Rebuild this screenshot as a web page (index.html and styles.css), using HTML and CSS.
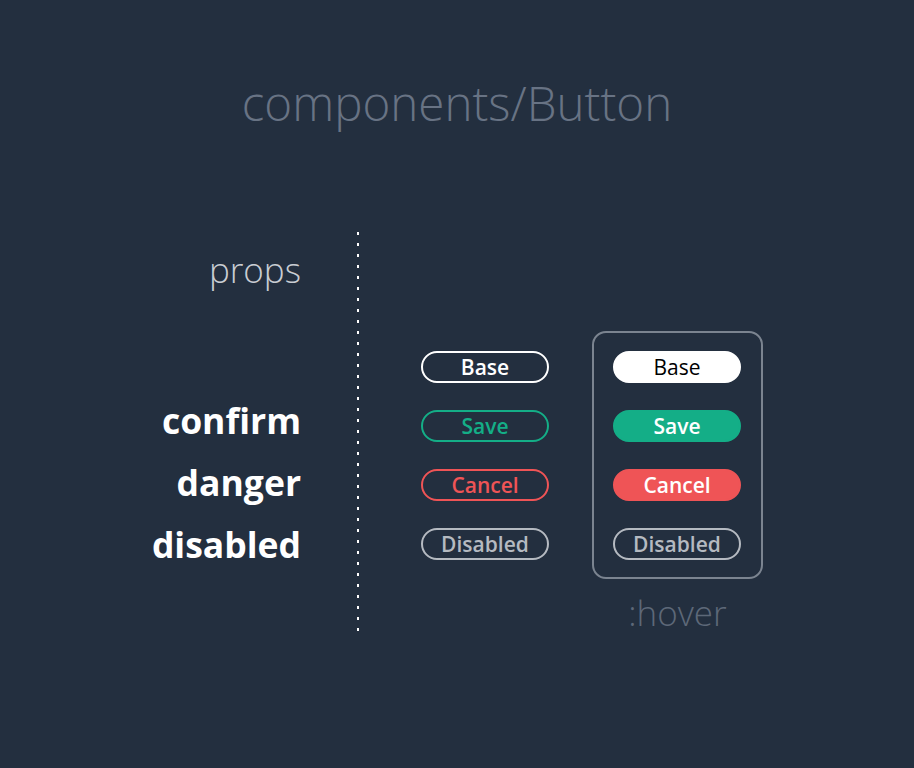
FILE: index.html
```html
<!DOCTYPE html>
<html lang="en">
<head>
<meta charset="utf-8">
<title>components/Button</title>
<link rel="stylesheet" href="styles.css">
</head>
<body>
<main class="page">
  <h1 class="title">components/Button</h1>
  <section class="sheet">
    <div class="labels">
      <div class="props">props</div>
      <div class="prop-list">
        <div class="prop">confirm</div>
        <div class="prop">danger</div>
        <div class="prop">disabled</div>
      </div>
    </div>
    <div class="divider"></div>
    <div class="buttons">
      <button class="btn btn-base">Base</button>
      <button class="btn btn-confirm">Save</button>
      <button class="btn btn-danger">Cancel</button>
      <button class="btn btn-disabled">Disabled</button>
    </div>
    <div class="hover-col">
      <div class="hover-box buttons-inner">
        <button class="btn btn-base is-hover">Base</button>
        <button class="btn btn-confirm is-hover">Save</button>
        <button class="btn btn-danger is-hover">Cancel</button>
        <button class="btn btn-disabled">Disabled</button>
      </div>
      <div class="hover-label">:hover</div>
    </div>
  </section>
</main>
</body>
</html>
```

FILE: styles.css
```css
html, body {
  margin: 0;
  padding: 0;
  background: #232f3f;
}

body {
  width: 914px;
  height: 768px;
  overflow: hidden;
  font-family: "Open Sans", "Liberation Sans", sans-serif;
}

.page {
  display: flex;
  flex-direction: column;
}

.title {
  margin: 0;
  padding-top: 78px;
  text-align: center;
  font-weight: 300;
  font-size: 47.5px;
  line-height: 50px;
  color: #687384;
  letter-spacing: 0;
}

.sheet {
  display: flex;
  align-items: flex-start;
  margin-top: 104px;
}

.labels {
  width: 301px;
  display: flex;
  flex-direction: column;
  align-items: flex-end;
  text-align: right;
}

.props {
  font-weight: 300;
  font-size: 35px;
  line-height: 48px;
  margin-top: 14px;
  color: #c9cdd3;
}

.prop-list {
  display: flex;
  flex-direction: column;
  margin-top: 95px;
}

.prop {
  font-weight: 700;
  font-size: 35.5px;
  line-height: 62px;
  color: #ffffff;
}

.divider {
  width: 2px;
  height: 399px;
  margin-left: 56px;
  background: repeating-linear-gradient(to bottom, #ffffff 0, #ffffff 3px, transparent 3px, transparent 11px);
}

.buttons {
  display: flex;
  flex-direction: column;
  gap: 27px;
  margin-left: 62px;
  padding-top: 119px;
}

.hover-col {
  display: flex;
  flex-direction: column;
  align-items: center;
  margin-left: 43px;
  margin-top: 99px;
}

.hover-box {
  display: flex;
  flex-direction: column;
  gap: 27px;
  padding: 18px 20px 17px 19px;
  border: 2px solid #7b8490;
  border-radius: 14px;
}

.hover-label {
  font-weight: 300;
  font-size: 35px;
  line-height: 48px;
  margin-top: 10px;
  color: #5d6878;
}

.btn {
  box-sizing: border-box;
  width: 128px;
  height: 32px;
  padding: 0;
  border: 2px solid #ffffff;
  border-radius: 16px;
  background: transparent;
  font-family: "Open Sans", "Liberation Sans", sans-serif;
  font-weight: 600;
  font-size: 21px;
  line-height: 26px;
  color: #ffffff;
  text-align: center;
}

.btn-confirm {
  border-color: #14ae87;
  color: #14ae87;
}

.btn-danger {
  border-color: #ef5456;
  color: #ef5456;
}

.btn-disabled {
  border-color: #b5bac1;
  color: #b5bac1;
}

.btn-base.is-hover {
  background: #ffffff;
  color: #000000;
  font-weight: 400;
}

.btn-confirm.is-hover {
  background: #14ae87;
  color: #ffffff;
}

.btn-danger.is-hover {
  background: #ef5456;
  color: #ffffff;
}
```
